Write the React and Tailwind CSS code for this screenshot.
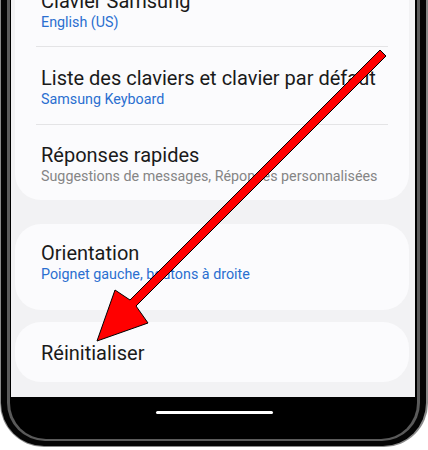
import React from "react";

const font = { fontFamily: "Roboto, 'Noto Sans', sans-serif" };

function Row({ title, sub, subColor = "text-[#2a6fd0]", divider, className = "" }) {
  return (
    <div className={"relative " + className}>
      <div className="text-[20px] leading-[24px] text-[#1a1a1a]">{title}</div>
      {sub && <div className={"text-[14.3px] leading-[19px] " + subColor}>{sub}</div>}
      {divider && <div className="absolute bottom-0 left-[-5px] right-[21px] h-[1px] bg-[#e4e4e6]" />}
    </div>
  );
}

export default function App() {
  return (
    <div className="relative w-[428px] h-[450px] bg-white overflow-hidden" style={font}>
      <div className="h-[447px] bg-[#8a8a8a] pl-[1px] pr-[2px] pb-[1px] rounded-b-[44px]">
        <div className="h-full bg-[#050505] pl-[6px] pr-[6px] pb-[5px] rounded-b-[43px]">
          <div className="h-full bg-[#5a5a5a] pl-[3px] pr-[3px] rounded-b-[38px] pb-[2px]">
            <div className="h-full bg-black rounded-b-[36px] flex flex-col pl-[1px] pr-[2px]">
              <div className="h-[397px] bg-[#f2f2f4] overflow-hidden flex flex-col pl-[4px] pr-[6px]">
                <div className="mt-[-38px] bg-[#fbfbfd] rounded-[26px] pl-[26px] pb-[14px]">
                  <Row title="Clavier Samsung" sub="English (US)" divider className="pt-[27px] h-[85px]" />
                  <Row title="Liste des claviers et clavier par défaut" sub="Samsung Keyboard" divider className="pt-[19px] h-[78px]" />
                  <Row title="Réponses rapides" sub="Suggestions de messages, Réponses personnalisées" subColor="text-[#858585]" className="pt-[18px]" />
                </div>
                <div className="mt-[24px] bg-[#fbfbfd] rounded-[26px] pl-[26px] pt-[17px] pb-[26px]">
                  <Row title="Orientation" sub="Poignet gauche, boutons à droite" />
                </div>
                <div className="mt-[12px] bg-[#fbfbfd] rounded-[26px] pl-[26px] pt-[19px] pb-[17px]">
                  <Row title="Réinitialiser" />
                </div>
              </div>
              <div className="flex-1 flex justify-center pt-[14px]">
                <div className="w-[117px] h-[3px] bg-white rounded-full ml-[2px]" />
              </div>
            </div>
          </div>
        </div>
      </div>
      <svg className="absolute inset-0 pointer-events-none" width="428" height="450" viewBox="0 0 428 450">
        <polygon
          points="380,50 386,56 136,306 148,323 97,341 115,290 130,300"
          fill="#ff0000"
          stroke="#000"
          strokeWidth="1"
          strokeLinejoin="miter"
        />
      </svg>
    </div>
  );
}
